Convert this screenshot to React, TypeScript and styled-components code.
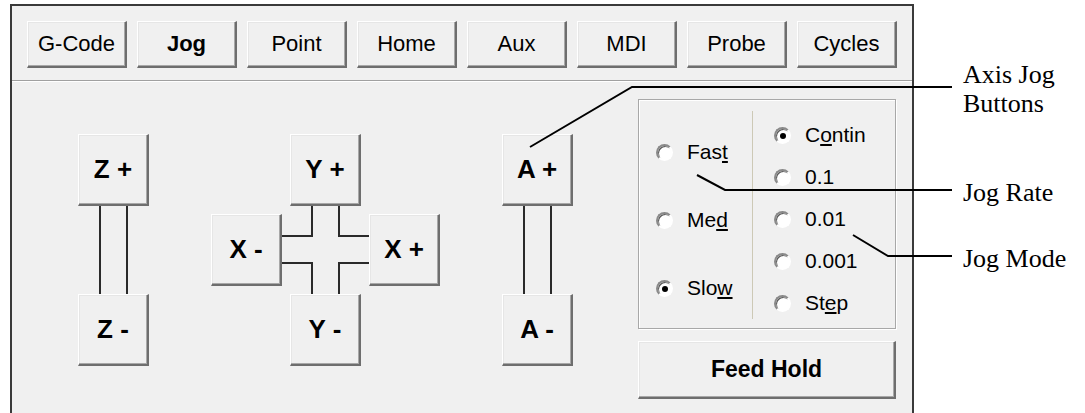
import styled, { createGlobalStyle } from 'styled-components';

const GlobalStyle = createGlobalStyle`
  html, body {
    margin: 0;
    padding: 0;
    background: #fff;
  }
  body {
    width: 1085px;
    height: 413px;
    overflow: hidden;
  }
`

const Page = styled.div`
  position: relative;
  box-sizing: border-box;
  display: flex;
  align-items: flex-start;
  width: 1085px;
  height: 413px;
  padding: 4px 0 0 10px;
  overflow: hidden;
`

const Panel = styled.div`
  flex-shrink: 0;
  box-sizing: border-box;
  width: 904px;
  height: 440px;
  border: 2px solid #3a3a3a;
  background: #f0f0f0;
  font-family: "Liberation Sans", Arial, sans-serif;
  color: #000;
`

const Toolbar = styled.div`
  display: flex;
  gap: 10px;
  padding: 15px 15px 12px;
  border-bottom: 1px solid #a0a0a0;
  box-shadow: 0 1px 0 #fff;
`

const ClassicButton = styled.button`
  box-sizing: border-box;
  display: flex;
  align-items: center;
  justify-content: center;
  padding: 0;
  background: #f0f0f0;
  border-style: solid;
  border-width: 1px 2px 2px 1px;
  border-color: #fff #6e6e6e #6e6e6e #fff;
  box-shadow: inset -1px -1px 0 #a8a8a8, inset 1px 1px 0 #e6e6e6;
  font-family: "Liberation Sans", Arial, sans-serif;
  color: #000;
`

const TabButton = styled(ClassicButton)<{ $active?: boolean }>`
  width: 100px;
  height: 47px;
  font-size: 22px;
  font-weight: ${p => (p.$active ? 700 : 400)};
`

const Body = styled.div`
  display: flex;
  align-items: flex-start;
  padding: 18px 0 0 66px;
`

const AxisPad = styled.div`
  display: grid;
  grid-template-columns: 71px 46px 71px 71px 71px 46px 71px;
  grid-template-rows: repeat(3, 72px);
  gap: 8px;
  margin-top: 35px;
`

const AxisButton = styled(ClassicButton)<{ $col: number; $row: number }>`
  grid-column: ${p => p.$col};
  grid-row: ${p => p.$row};
  width: 71px;
  height: 72px;
  font-size: 26px;
  font-weight: 700;
  white-space: pre;
`

const Rail = styled.div<{ $col: number }>`
  grid-column: ${p => p.$col};
  grid-row: 2;
  justify-self: center;
  box-sizing: border-box;
  width: 29px;
  margin: -8px 0;
  border-left: 2px solid #2a2a2a;
  border-right: 2px solid #2a2a2a;
`

const CrossWrap = styled.div`
  grid-column: 4;
  grid-row: 2;
  margin: -8px;
  display: flex;
`

const SideColumn = styled.div`
  display: flex;
  flex-direction: column;
  gap: 12px;
  width: 258px;
  margin-left: 65px;
`

const RadioBox = styled.div`
  box-sizing: border-box;
  display: grid;
  grid-template-columns: 113px 1fr;
  height: 230px;
  border: 1px solid #a8a8a8;
  box-shadow: inset 1px 1px 0 #fff, 1px 1px 0 #fff;
`

const RateColumn = styled.div`
  display: flex;
  flex-direction: column;
  gap: 44px;
  padding: 40px 0 0 17px;
`

const ModeColumn = styled.div`
  display: flex;
  flex-direction: column;
  gap: 18px;
  margin: 11px 0 9px;
  padding: 12px 0 0 21px;
  border-left: 1px solid #cdc9b6;
`

const RadioRow = styled.label`
  display: flex;
  align-items: center;
  gap: 14px;
  height: 24px;
  font-size: 21px;
  line-height: 24px;
  color: #000;
  white-space: nowrap;
`

const RadioDot = styled.span<{ $checked?: boolean }>`
  flex-shrink: 0;
  position: relative;
  box-sizing: border-box;
  width: 17px;
  height: 17px;
  border-radius: 50%;
  border: 2px solid;
  border-color: #8a8a8a #fff #fff #8a8a8a;
  background: #fff;
  box-shadow: inset 1px 1px 0 #5a5a5a;

  &::after {
    content: '';
    display: ${p => (p.$checked ? 'block' : 'none')};
    position: absolute;
    left: 4px;
    top: 4px;
    width: 6px;
    height: 6px;
    border-radius: 50%;
    background: #000;
  }
`

const FeedHold = styled(ClassicButton)`
  width: 258px;
  height: 58px;
  font-size: 23px;
  font-weight: 700;
`

const Callouts = styled.div`
  display: flex;
  flex-direction: column;
  margin: 56px 0 0 49px;
  font-family: "Liberation Serif", "Times New Roman", serif;
  font-size: 26px;
  line-height: 29px;
  color: #000;
`

const Callout = styled.div<{ $gap: number }>`
  margin-top: ${p => p.$gap}px;
  white-space: pre;
`

const Leaders = styled.svg`
  position: absolute;
  left: 0;
  top: 0;
  pointer-events: none;
`

const tabs = ['G-Code', 'Jog', 'Point', 'Home', 'Aux', 'MDI', 'Probe', 'Cycles']

// hot: index of the underlined access-key letter, -1 for none
type Radio = { label: string; hot: number; checked?: boolean }

const rates: Radio[] = [
  { label: 'Fast', hot: 3 },
  { label: 'Med', hot: 2 },
  { label: 'Slow', hot: 3, checked: true },
]

const modes: Radio[] = [
  { label: 'Contin', hot: 1, checked: true },
  { label: '0.1', hot: -1 },
  { label: '0.01', hot: -1 },
  { label: '0.001', hot: -1 },
  { label: 'Step', hot: 2 },
]

const RadioLabel = ({ label, hot }: { label: string; hot: number }) => {
  if (hot < 0) return <span>{label}</span>
  return (
    <span>
      {label.slice(0, hot)}
      <u>{label[hot]}</u>
      {label.slice(hot + 1)}
    </span>
  )
}

const App = () => {
  return (
    <>
      <GlobalStyle />
      <Page>
        <Panel>
          <Toolbar>
            {tabs.map(t => (
              <TabButton key={t} $active={t === 'Jog'}>{t}</TabButton>
            ))}
          </Toolbar>
          <Body>
            <AxisPad>
              <AxisButton $col={1} $row={1}>Z +</AxisButton>
              <Rail $col={1} />
              <AxisButton $col={1} $row={3}>Z -</AxisButton>

              <AxisButton $col={4} $row={1}>Y +</AxisButton>
              <AxisButton $col={3} $row={2}>X -</AxisButton>
              <CrossWrap>
                <svg width="87" height="88" viewBox="0 0 87 88" fill="none" stroke="#2a2a2a" strokeWidth="2">
                  <path d="M30 0V30H0M57 0V30H87M0 57H30V88M87 57H57V88" />
                </svg>
              </CrossWrap>
              <AxisButton $col={5} $row={2}>X +</AxisButton>
              <AxisButton $col={4} $row={3}>Y -</AxisButton>

              <AxisButton $col={7} $row={1}>A +</AxisButton>
              <Rail $col={7} />
              <AxisButton $col={7} $row={3}>A -</AxisButton>
            </AxisPad>
            <SideColumn>
              <RadioBox>
                <RateColumn>
                  {rates.map(r => (
                    <RadioRow key={r.label}>
                      <RadioDot $checked={r.checked} />
                      <RadioLabel label={r.label} hot={r.hot} />
                    </RadioRow>
                  ))}
                </RateColumn>
                <ModeColumn>
                  {modes.map(m => (
                    <RadioRow key={m.label}>
                      <RadioDot $checked={m.checked} />
                      <RadioLabel label={m.label} hot={m.hot} />
                    </RadioRow>
                  ))}
                </ModeColumn>
              </RadioBox>
              <FeedHold>Feed Hold</FeedHold>
            </SideColumn>
          </Body>
        </Panel>
        <Callouts>
          <Callout $gap={0}>{'Axis Jog\nButtons'}</Callout>
          <Callout $gap={60}>Jog Rate</Callout>
          <Callout $gap={37}>Jog Mode</Callout>
        </Callouts>
        <Leaders width="1085" height="413" viewBox="0 0 1085 413" fill="none" stroke="#000" strokeWidth="2">
          <path d="M530 147L632 87H952" />
          <path d="M697 175L725 190H952" />
          <path d="M853 235L888 256H952" />
        </Leaders>
      </Page>
    </>
  )
}

export default App
